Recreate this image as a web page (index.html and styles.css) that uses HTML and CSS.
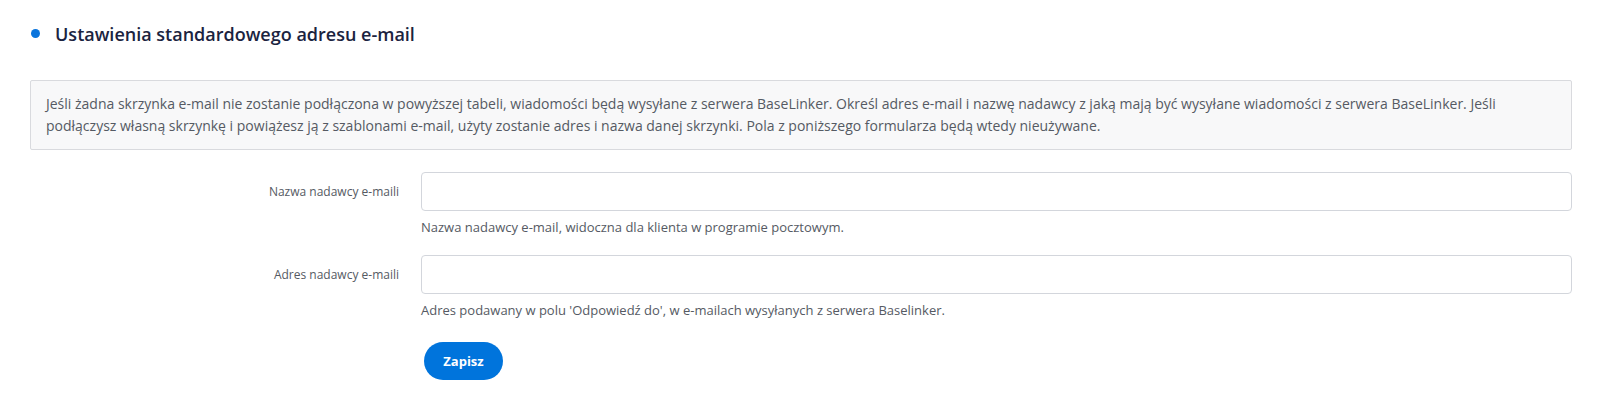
FILE: index.html
```html
<!DOCTYPE html>
<html lang="pl">
<head>
  <meta charset="UTF-8">
  <meta name="viewport" content="width=device-width, initial-scale=1.0">
  <title>Ustawienia standardowego adresu e-mail</title>
  <link rel="stylesheet" href="styles.css">
</head>
<body>
  <section class="panel">
    <h2 class="panel-title"><span class="dot"></span>Ustawienia standardowego adresu e-mail</h2>
    <div class="info">
      Jeśli żadna skrzynka e-mail nie zostanie podłączona w powyższej tabeli, wiadomości będą wysyłane z serwera BaseLinker. Określ adres e-mail i nazwę nadawcy z jaką mają być wysyłane wiadomości z serwera BaseLinker. Jeśli podłączysz własną skrzynkę i powiążesz ją z szablonami e-mail, użyty zostanie adres i nazwa danej skrzynki. Pola z poniższego formularza będą wtedy nieużywane.
    </div>
    <form class="form" onsubmit="return false;">
      <div class="row">
        <label class="label" for="sender-name">Nazwa nadawcy e-maili</label>
        <div class="field">
          <input type="text" id="sender-name">
          <span class="help">Nazwa nadawcy e-mail, widoczna dla klienta w programie pocztowym.</span>
        </div>
      </div>
      <div class="row">
        <label class="label" for="sender-mail">Adres nadawcy e-maili</label>
        <div class="field">
          <input type="text" id="sender-mail">
          <span class="help">Adres podawany w polu 'Odpowiedź do', w e-mailach wysyłanych z serwera Baselinker.</span>
        </div>
      </div>
      <div class="row">
        <div></div>
        <div class="field">
          <button type="submit" class="btn">Zapisz</button>
        </div>
      </div>
    </form>
  </section>
</body>
</html>
```

FILE: styles.css
```css
* {
  margin: 0px;
  padding: 0px;
  box-sizing: border-box;
}
body {
  background-color: white;
  font-family: "Open Sans", "Liberation Sans", sans-serif;
  color: #555a63;
}
.panel {
  padding: 20px 31px 0px 30px;
}
.panel-title {
  display: flex;
  align-items: center;
  height: 27px;
  font-size: 18px;
  font-weight: 600;
  color: #1b2340;
}
.dot {
  width: 9px;
  height: 9px;
  border-radius: 50%;
  background-color: #0a74dc;
  margin: 0px 15px 0px 1px;
}
.info {
  margin-top: 33px;
  padding: 12px 15px;
  background-color: #f8f8f9;
  border: 1px solid #d9dade;
  border-radius: 2px;
  font-size: 14px;
  line-height: 22px;
  color: #555a63;
}
.form {
  margin-top: 22px;
}
.row {
  display: grid;
  grid-template-columns: 391px 1fr;
  margin-bottom: 18px;
}
.label {
  font-size: 12px;
  text-align: right;
  padding-right: 22px;
  height: 39px;
  line-height: 39px;
  color: #555a63;
}
.field input {
  display: block;
  width: 100%;
  height: 39px;
  border: 1px solid #d3d6dc;
  border-radius: 4px;
  padding: 0px 10px;
  font-family: inherit;
  font-size: 13px;
}
.help {
  display: block;
  margin-top: 6px;
  font-size: 13px;
  line-height: 20px;
  color: #555a63;
}
.btn {
  margin-top: 4px;
  margin-left: 3px;
  width: 79px;
  height: 38px;
  border: none;
  border-radius: 19px;
  background-color: #0074dc;
  color: white;
  font-family: inherit;
  font-size: 13px;
  font-weight: 700;
  cursor: pointer;
}
```
